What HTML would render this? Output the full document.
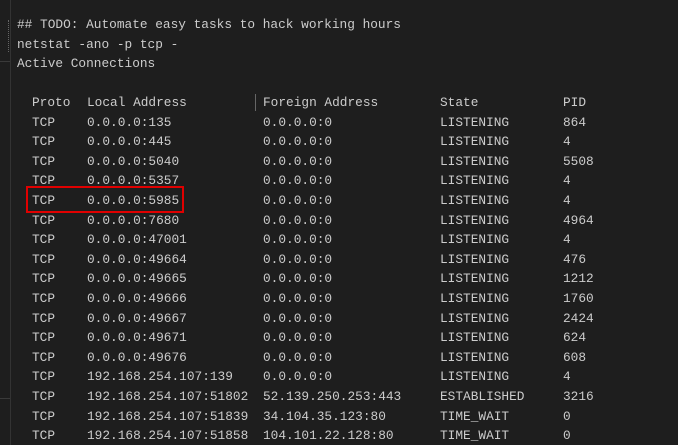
<!DOCTYPE html>
<html><head><meta charset="utf-8"><style>
html,body{margin:0;padding:0;width:678px;height:445px;overflow:hidden;background:#1e1e1e;}
body{position:relative;font-family:"Liberation Mono",monospace;font-size:12.8px;color:#cccccc;}
.l{position:absolute;left:0;white-space:pre;line-height:20px;height:20px;}
.l span{position:absolute;top:0}
.strip{position:absolute;left:0;top:0;width:10px;height:445px;background:#1e1e1e;border-right:1px solid #333;}
</style></head><body>
<div class="strip"></div>
<div style="position:absolute;left:0;top:61px;width:10px;height:1px;background:#3a3a3a"></div>
<div style="position:absolute;left:0;top:398px;width:10px;height:1px;background:#3a3a3a"></div>
<div style="position:absolute;left:8px;top:20px;width:1px;height:32px;border-left:1px dotted #666"></div>
<div class="l" style="top:15px"><span style="left:17px">## TODO: Automate easy tasks to hack working hours</span></div>
<div class="l" style="top:35px"><span style="left:17px">netstat -ano -p tcp -</span></div>
<div class="l" style="top:54px"><span style="left:17px">Active Connections</span></div>
<div style="position:absolute;left:255px;top:94px;width:1px;height:17px;background:#666"></div>
<div style="position:absolute;left:26px;top:186px;width:154px;height:23px;border:2px solid #e00000"></div>
<div id="rows"></div>
<script>
var rows=[["Proto","Local Address","Foreign Address","State","PID"],
["TCP","0.0.0.0:135","0.0.0.0:0","LISTENING","864"],
["TCP","0.0.0.0:445","0.0.0.0:0","LISTENING","4"],
["TCP","0.0.0.0:5040","0.0.0.0:0","LISTENING","5508"],
["TCP","0.0.0.0:5357","0.0.0.0:0","LISTENING","4"],
["TCP","0.0.0.0:5985","0.0.0.0:0","LISTENING","4"],
["TCP","0.0.0.0:7680","0.0.0.0:0","LISTENING","4964"],
["TCP","0.0.0.0:47001","0.0.0.0:0","LISTENING","4"],
["TCP","0.0.0.0:49664","0.0.0.0:0","LISTENING","476"],
["TCP","0.0.0.0:49665","0.0.0.0:0","LISTENING","1212"],
["TCP","0.0.0.0:49666","0.0.0.0:0","LISTENING","1760"],
["TCP","0.0.0.0:49667","0.0.0.0:0","LISTENING","2424"],
["TCP","0.0.0.0:49671","0.0.0.0:0","LISTENING","624"],
["TCP","0.0.0.0:49676","0.0.0.0:0","LISTENING","608"],
["TCP","192.168.254.107:139","0.0.0.0:0","LISTENING","4"],
["TCP","192.168.254.107:51802","52.139.250.253:443","ESTABLISHED","3216"],
["TCP","192.168.254.107:51839","34.104.35.123:80","TIME_WAIT","0"],
["TCP","192.168.254.107:51858","104.101.22.128:80","TIME_WAIT","0"]];
var xs=[32,87,263,440,563],h="";
rows.forEach(function(r,i){var t=93+i*19.6;h+='<div class="l" style="top:'+t+'px">';
r.forEach(function(c,j){h+='<span style="left:'+xs[j]+'px">'+c+'</span>';});h+='</div>';});
document.getElementById("rows").innerHTML=h;
</script>
</body></html>
